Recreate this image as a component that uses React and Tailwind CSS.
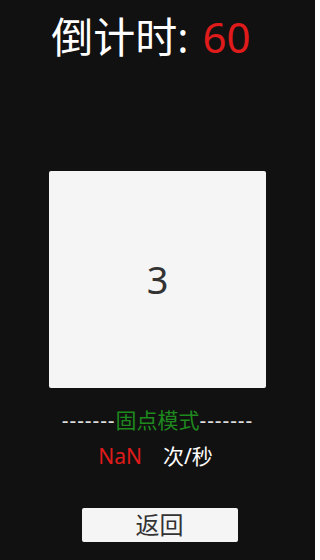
export default function App() {
  return (
    <div
      className="w-[315px] h-[560px] bg-[#111111] flex flex-col items-center overflow-hidden"
      style={{ fontFamily: '"Noto Sans", "Noto Sans CJK SC", sans-serif' }}
    >
      <div className="mt-[11px] h-[52px] flex items-center text-[42px] leading-none text-white pr-[13px]">
        <span>倒计时:</span>
        <span className="ml-[14px] text-[#e01b1b]">60</span>
      </div>

      <div className="mt-[108px] w-[217px] h-[217px] bg-[#f5f5f5] rounded-[2px] flex items-center justify-center text-[38px] text-[#333333]">
        3
      </div>

      <div className="mt-[22px] text-[21px] leading-none text-[#dddddd] flex items-center">
        <span className="tracking-[0.9px]">-------</span>
        <span className="text-[#1e8a1e]">固点模式</span>
        <span className="tracking-[0.9px]">-------</span>
      </div>

      <div className="mt-[15px] flex items-center text-[21px] leading-none pr-[4px]">
        <span className="text-[#e01b1b]">NaN</span>
        <span className="ml-[21px] text-white">次/秒</span>
      </div>

      <button className="mt-[41px] ml-[4px] w-[156px] h-[34px] bg-[#f5f5f5] rounded-[2px] text-[24px] leading-none text-[#333333] flex items-center justify-center">
        返回
      </button>
    </div>
  );
}
